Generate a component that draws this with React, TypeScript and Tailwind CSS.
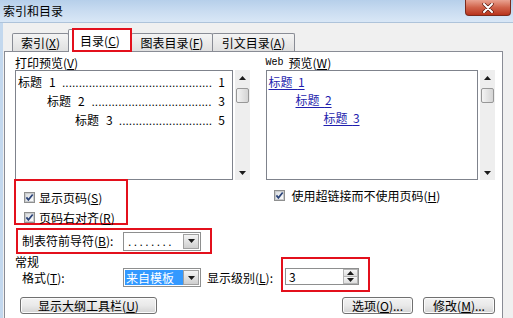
import React from 'react';

const RED = 'border-[#e3101c]';

function Key({ k }: { k: string }) {
  return (
    <>
      (<u className="underline-offset-[1px]">{k}</u>)
    </>
  );
}

function Tri({ up = false }: { up?: boolean }) {
  return (
    <svg width="7" height="4" viewBox="0 0 7 4" className="shrink-0">
      <path d={up ? 'M0 4 L3.5 0 L7 4 Z' : 'M0 0 L7 0 L3.5 4 Z'} fill="#1a1a1a" />
    </svg>
  );
}

function CheckBox() {
  return (
    <svg width="11" height="11" viewBox="0 0 11 11" className="shrink-0">
      <defs>
        <linearGradient id="cbg" x1="0" y1="0" x2="1" y2="1">
          <stop offset="0" stopColor="#d9dcdf" />
          <stop offset="1" stopColor="#ffffff" />
        </linearGradient>
      </defs>
      <rect x="0.5" y="0.5" width="10" height="10" fill="#f6f6f6" stroke="#8e8f8f" />
      <rect x="1.5" y="1.5" width="8" height="8" fill="url(#cbg)" stroke="#c9cbcd" />
      <path d="M2.4 5.4 L4.4 7.9 L8.7 2.5" fill="none" stroke="#2b4479" strokeWidth="1.7" />
    </svg>
  );
}

function ScrollBar() {
  return (
    <div className="w-[15px] h-[110px] bg-[#eeeeee] flex flex-col items-center">
      <div className="h-[16px] flex items-center justify-center">
        <Tri up />
      </div>
      <div className="w-[13px] h-[15px] mt-[2px] rounded-[2px] border border-[#979797] bg-gradient-to-r from-[#f4f4f4] to-[#d4d4d4]" />
      <div className="flex-1" />
      <div className="h-[14px] flex items-center justify-center">
        <Tri />
      </div>
    </div>
  );
}

function DropButton() {
  return (
    <div className="w-[16px] my-[1px] mr-[1px] border border-[#a0a0a0] bg-gradient-to-b from-[#f4f4f4] to-[#cfcfcf] flex items-center justify-center">
      <Tri />
    </div>
  );
}

function Btn({ className, children }: { className: string; children: React.ReactNode }) {
  return (
    <div
      className={`h-[17px] rounded-[3px] border border-[#707070] bg-gradient-to-b from-[#f3f3f3] via-[#e9e9e9] to-[#d3d3d3] flex items-center justify-center text-[12px] leading-none shadow-[inset_0_0_0_1px_#fbfbfb] ${className}`}
    >
      {children}
    </div>
  );
}

// dot counts chosen so each leader fills the row without overflowing
const printRows = [
  { indent: 'pl-[2px]', level: '1', page: '1', dots: 45 },
  { indent: 'pl-[31px]', level: '2', page: '3', dots: 36 },
  { indent: 'pl-[59px]', level: '3', page: '5', dots: 28 },
];

const webRows = [
  { indent: 'pl-[2px]', level: '1' },
  { indent: 'pl-[29px]', level: '2' },
  { indent: 'pl-[57px]', level: '3' },
];

export default function App() {
  return (
    <div className="w-[513px] h-[318px] overflow-hidden flex flex-col bg-[#c3d8ee] text-[12px] text-black font-['Noto_Sans_CJK_SC',sans-serif]">
      {/* title bar */}
      <div className="h-[23px] shrink-0 relative bg-[linear-gradient(180deg,#b6cfea_0%,#c9dcf1_50%,#d9e7f6_100%)] border-b border-[#aec3da]">
        <div className="pl-[3px] pt-[1px] leading-[20px] text-[12px]">索引和目录</div>
        <div className="absolute right-[2px] top-0 w-[46px] h-[16px] rounded-b-[4px] border border-t-0 border-[#7a2a1c] bg-gradient-to-b from-[#e9a291] via-[#d0624a] to-[#b8321b] flex items-center justify-center">
          <svg width="12" height="10" viewBox="0 0 12 10">
            <path d="M2 1 L10 9 M10 1 L2 9" stroke="#5a1a10" strokeWidth="3.4" strokeLinecap="round" />
            <path d="M2 1 L10 9 M10 1 L2 9" stroke="#ffffff" strokeWidth="2" strokeLinecap="round" />
          </svg>
        </div>
      </div>

      {/* client */}
      <div className="flex-1 ml-[3px] bg-[#f0f0f0] flex flex-col">
        {/* tabs */}
        <div className="h-[28px] shrink-0 flex items-end pl-[9px]">
          <div className="w-[57px] h-[18px] border border-b-0 border-[#898c95] rounded-t-[2px] bg-gradient-to-b from-[#f4f4f4] to-[#e0e0e0] flex items-center justify-center leading-none">
            索引<Key k="X" />
          </div>
          <div className="relative z-10 -ml-[1px] -mb-[1px] w-[64px] h-[23px] border border-b-0 border-[#898c95] rounded-t-[2px] bg-white flex items-center justify-center leading-none pb-[1px]">
            目录<Key k="C" />
            <div className={`absolute left-[3px] -top-[2px] w-[60px] h-[24px] border-2 ${RED}`} />
          </div>
          <div className="-ml-[1px] w-[82px] h-[18px] border border-b-0 border-[#898c95] rounded-t-[2px] bg-gradient-to-b from-[#f4f4f4] to-[#e0e0e0] flex items-center justify-center leading-none">
            图表目录<Key k="F" />
          </div>
          <div className="-ml-[1px] w-[83px] h-[18px] border border-b-0 border-[#898c95] rounded-t-[2px] bg-gradient-to-b from-[#f4f4f4] to-[#e0e0e0] flex items-center justify-center leading-none">
            引文目录<Key k="A" />
          </div>
        </div>

        {/* panel */}
        <div className="flex-1 ml-[1px] w-[499px] border border-b-0 border-[#898c95] bg-white pl-[9px] pr-[7px] flex flex-col">
          <div className="flex">
            {/* print preview */}
            <div className="w-[237px] flex flex-col">
              <div className="h-[18px] pt-[4px] pl-[1px] leading-[14px]">
                打印预览<Key k="V" />
              </div>
              <div className="flex pl-[1px]">
                <div className="w-[218px] h-[110px] border border-[#7f838c] bg-white pt-[2px] pr-[7px] leading-[18px]">
                  {printRows.map((r) => (
                    <div key={r.level} className={`flex items-baseline ${r.indent}`}>
                      <span className="whitespace-nowrap">
                        标题<span className="ml-[7px]">{r.level}</span>
                      </span>
                      <span className="flex-1 text-center whitespace-nowrap font-['Liberation_Sans',sans-serif]">
                        {'.'.repeat(r.dots)}
                      </span>
                      <span>{r.page}</span>
                    </div>
                  ))}
                </div>
                <div className="ml-[2px]">
                  <ScrollBar />
                </div>
              </div>
              <div className={`-mt-[1px] w-[114px] h-[46px] border-2 ${RED} pl-[8px] pt-[11px] flex flex-col gap-[9px]`}>
                <div className="h-[11px] flex items-center gap-[4px] leading-none">
                  <CheckBox />
                  <span>
                    显示页码<Key k="S" />
                  </span>
                </div>
                <div className="h-[11px] flex items-center gap-[4px] leading-none">
                  <CheckBox />
                  <span>
                    页码右对齐<Key k="R" />
                  </span>
                </div>
              </div>
            </div>

            {/* web preview */}
            <div className="ml-[14px] w-[231px] flex flex-col">
              <div className="h-[18px] pt-[4px] pl-[1px] leading-[14px] flex items-center">
                <span className="font-['Liberation_Mono',monospace] text-[10px] mr-[5px]">Web</span>
                预览<Key k="W" />
              </div>
              <div className="flex pl-[1px]">
                <div className="w-[212px] h-[110px] border border-[#7f838c] bg-white pt-[2px] leading-[18px] text-[#1f1fae]">
                  {webRows.map((r) => (
                    <div key={r.level} className={r.indent}>
                      <span className="underline underline-offset-[2px] whitespace-pre">标题  {r.level}</span>
                    </div>
                  ))}
                </div>
                <div className="ml-[2px]">
                  <ScrollBar />
                </div>
              </div>
              <div className="mt-[10px] pl-[9px] h-[11px] flex items-center gap-[7px] leading-none">
                <CheckBox />
                <span>
                  使用超链接而不使用页码<Key k="H" />
                </span>
              </div>
            </div>
          </div>

          {/* tab leader */}
          <div className={`mt-[3px] ml-[2px] w-[196px] h-[26px] border-2 ${RED} pl-[4px] pr-[9px] flex items-center justify-between`}>
            <span className="leading-none">
              制表符前导符<Key k="B" />:
            </span>
            <div className="w-[78px] h-[19px] border border-[#8e8f8f] bg-white flex">
              <div className="flex-1 flex items-center pl-[4px] font-['Liberation_Sans',sans-serif] tracking-[2.4px] leading-none pt-[2px]">
                ........
              </div>
              <DropButton />
            </div>
          </div>

          {/* general */}
          <div className="mt-[1px] pl-[1px] h-[13px] leading-[13px]">常规</div>
          <div className="h-[19px] flex items-center">
            <span className="ml-[8px] w-[101px] leading-none">
              格式<Key k="T" />:
            </span>
            <div className="w-[78px] h-[19px] border border-[#8e8f8f] bg-white flex">
              <div className="flex-1 flex items-center py-[1px] pl-[1px]">
                <div className="h-full w-[58px] bg-[#3399ff] text-white flex items-center pl-[1px] leading-none">来自模板</div>
              </div>
              <DropButton />
            </div>
            <span className="ml-[6px] w-[74px] leading-none whitespace-nowrap">
              显示级别<Key k="L" />:
            </span>
            <div className={`self-start -mt-[11px] w-[89px] h-[35px] border-2 ${RED} pl-[2px] pt-[9px]`}>
              <div className="w-[74px] h-[17px] border border-[#8e8f8f] bg-white flex">
                <div className="flex-1 flex items-center pl-[3px] leading-none">3</div>
                <div className="w-[15px] flex flex-col">
                  <div className="flex-1 border border-[#b5b5b5] bg-gradient-to-b from-[#f6f6f6] to-[#dedede] flex items-center justify-center">
                    <Tri up />
                  </div>
                  <div className="flex-1 border border-t-0 border-[#b5b5b5] bg-gradient-to-b from-[#f6f6f6] to-[#dedede] flex items-center justify-center">
                    <Tri />
                  </div>
                </div>
              </div>
            </div>
          </div>

          {/* buttons */}
          <div className="mt-[10px] flex">
            <Btn className="ml-[6px] w-[137px]">
              显示大纲工具栏<Key k="U" />
            </Btn>
            <Btn className="ml-auto w-[71px]">
              选项<Key k="O" />...
            </Btn>
            <Btn className="ml-[10px] w-[72px]">
              修改<Key k="M" />...
            </Btn>
          </div>
        </div>
      </div>
    </div>
  );
}
